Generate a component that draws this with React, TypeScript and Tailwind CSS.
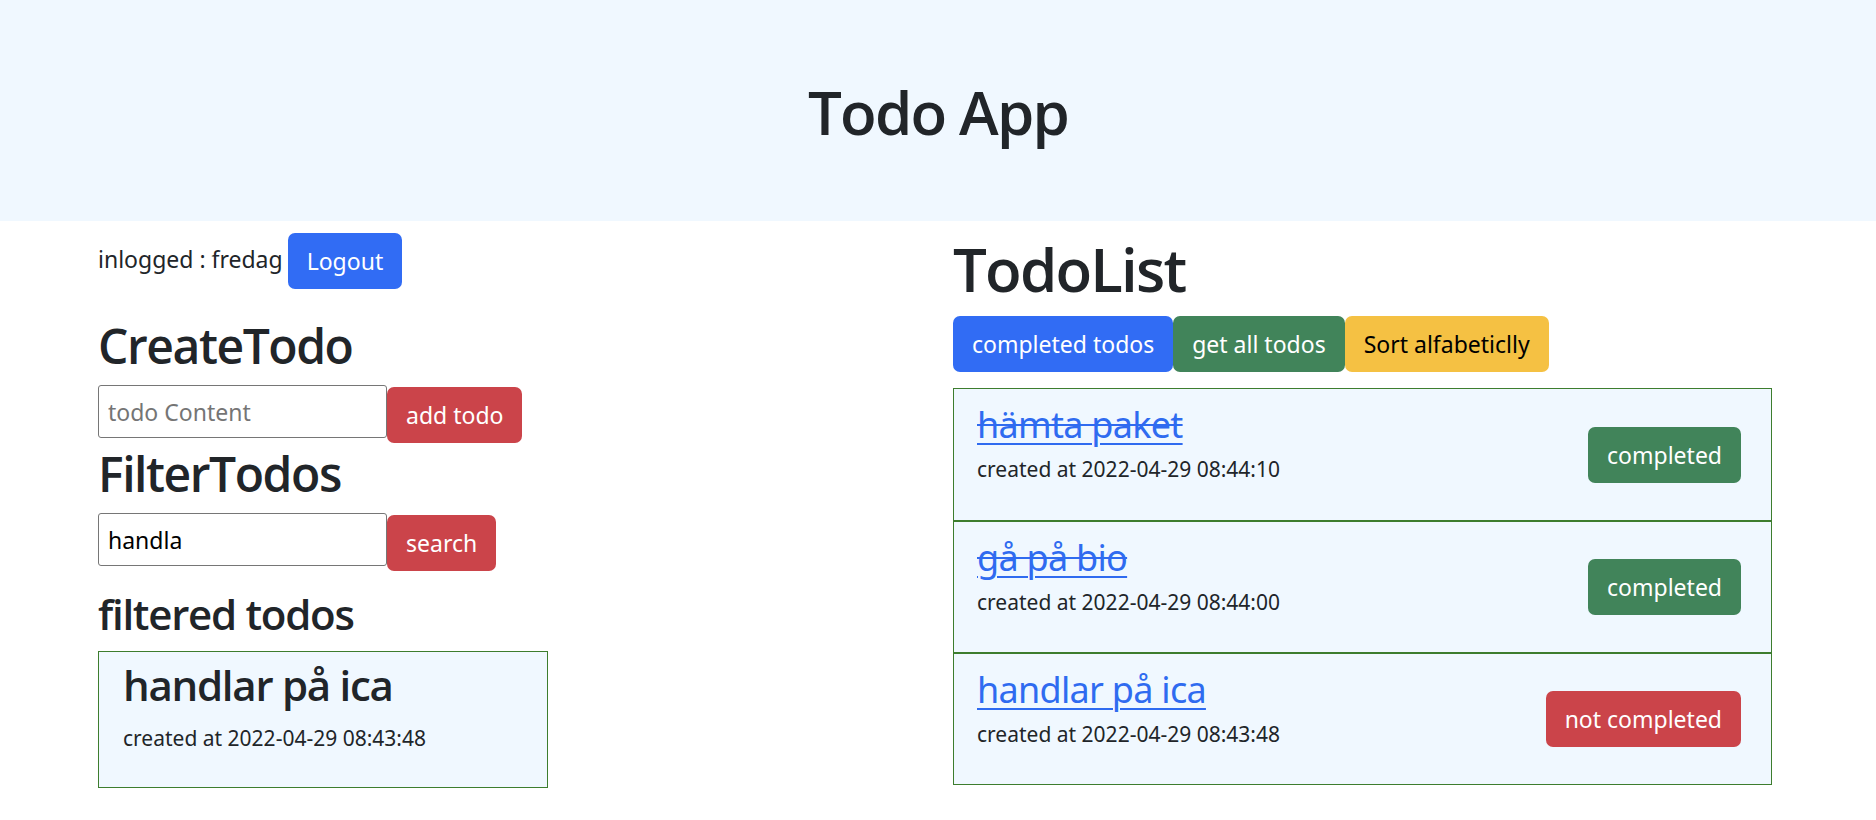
import { useState } from "react";

type Todo = {
  id: number;
  content: string;
  createdAt: string;
  completed: boolean;
};

const todos: Todo[] = [
  { id: 1, content: "hämta paket", createdAt: "2022-04-29 08:44:10", completed: true },
  { id: 2, content: "gå på bio", createdAt: "2022-04-29 08:44:00", completed: true },
  { id: 3, content: "handlar på ica", createdAt: "2022-04-29 08:43:48", completed: false },
];

const btn = "inline-block rounded-[7px] border border-transparent px-[18px] py-[9px] text-[23px] leading-[36px]";
const input =
  "h-[53px] w-[289px] rounded-[3px] border border-[#767676] bg-white px-[9px] text-[23px] text-black outline-none placeholder:text-[#757575]";
const heading = "font-['Open_Sans','Noto_Sans',sans-serif] font-semibold tracking-[-0.03em]";

export default function App() {
  const [search, setSearch] = useState("handla");
  const [content, setContent] = useState("");

  return (
    <div className="min-h-screen bg-white text-[#212529] font-['Noto_Sans','Open_Sans',sans-serif]">
      <header className="flex h-[221px] items-center justify-center bg-[#f0f8ff] pt-[3px]">
        <h1 className={`${heading} text-[60px] leading-[72px]`}>Todo App</h1>
      </header>

      <div className="ml-[98px] grid w-[1674px] grid-cols-2 gap-x-[36px]">
        {/* left column */}
        <div>
          <div className="mt-[12px] flex items-center">
            <span className="mb-[4px] mr-[5px] text-[23px] leading-[36px]">inlogged : fredag</span>
            <button type="button" className={`${btn} bg-[#316cf4] text-white`}>
              Logout
            </button>
          </div>

          <h2 className={`${heading} mt-[28px] text-[48px] leading-[58px]`}>CreateTodo</h2>
          <div className="mt-[10px] flex items-start">
            <input
              className={input}
              placeholder="todo Content"
              value={content}
              onChange={(e) => setContent(e.target.value)}
            />
            <button type="button" className={`${btn} mt-[2px] bg-[#cb444a] text-white`}>
              add todo
            </button>
          </div>

          <h2 className={`${heading} mt-[2px] text-[48px] leading-[58px]`}>FilterTodos</h2>
          <div className="mt-[10px] flex items-start">
            <input className={input} value={search} onChange={(e) => setSearch(e.target.value)} />
            <button type="button" className={`${btn} mt-[2px] bg-[#cb444a] text-white`}>
              search
            </button>
          </div>

          <h3 className={`${heading} mt-[18px] text-[42px] leading-[50px]`}>filtered todos</h3>
          <div className="mt-[12px] h-[137px] w-[450px] border border-[#3d7d2e] bg-[#f0f8ff] pl-[24px] pt-[8px]">
            <h3 className={`${heading} text-[42px] leading-[50px]`}>handlar på ica</h3>
            <p className="mt-[12px] text-[21px] leading-[32px]">created at 2022-04-29 08:43:48</p>
          </div>
        </div>

        {/* right column */}
        <div>
          <h1 className={`${heading} mt-[12px] text-[60px] leading-[72px]`}>TodoList</h1>
          <div className="mt-[11px] flex">
            <button type="button" className={`${btn} bg-[#316cf4] text-white`}>
              completed todos
            </button>
            <button type="button" className={`${btn} bg-[#41845a] text-white`}>
              get all todos
            </button>
            <button type="button" className={`${btn} bg-[#f5c143] text-black`}>
              Sort alfabeticlly
            </button>
          </div>

          <ul className="mt-[16px] border-b border-[#3d7d2e]">
            {todos.map((t) => (
              <li
                key={t.id}
                className="flex h-[132px] items-center justify-between border-x border-t-2 border-[#3d7d2e] bg-[#f0f8ff] pl-[23px] pr-[30px] first:border-t"
              >
                <div className="self-start pt-[14px]">
                  <a
                    href="#"
                    className={`text-[36px] leading-[43px] tracking-[-0.02em] text-[#2f6bf0] ${
                      t.completed ? "[text-decoration-line:underline_line-through]" : "underline"
                    } decoration-[2px] underline-offset-[5px]`}
                  >
                    {t.content}
                  </a>
                  <p className="mt-[7px] text-[21px] leading-[32px]">created at {t.createdAt}</p>
                </div>
                <button
                  type="button"
                  className={`${btn} ${t.completed ? "bg-[#41845a]" : "bg-[#cb444a]"} text-white`}
                >
                  {t.completed ? "completed" : "not completed"}
                </button>
              </li>
            ))}
          </ul>
        </div>
      </div>
    </div>
  );
}
